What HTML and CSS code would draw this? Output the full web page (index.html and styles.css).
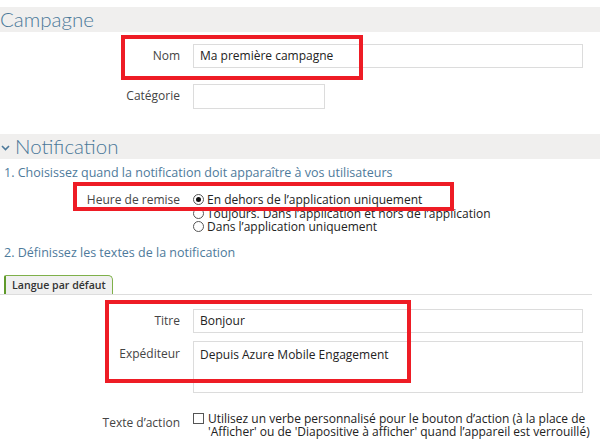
FILE: index.html
```html
<!DOCTYPE html>
<html lang="fr">
<head>
<meta charset="utf-8">
<link rel="stylesheet" href="styles.css">
</head>
<body>
<div class="page">
  <div class="bar"><span class="bar-title">Campagne</span></div>
  <div class="row row-nom">
    <label class="lbl">Nom</label>
    <div class="input wide">Ma première campagne</div>
  </div>
  <div class="row row-cat">
    <label class="lbl">Catégorie</label>
    <div class="input short"></div>
  </div>

  <div class="bar bar-notif">
    <svg class="chev" width="9" height="6" viewBox="0 0 9 6"><path d="M1 1 L4.5 4.5 L8 1" fill="none" stroke="#4e7a9b" stroke-width="1.6"/></svg>
    <span class="bar-title">Notification</span>
  </div>
  <div class="step step1">1. Choisissez quand la notification doit apparaître à vos utilisateurs</div>
  <div class="row row-heure">
    <label class="lbl">Heure de remise</label>
    <div class="radios">
      <div class="opt"><span class="radio on"></span>En dehors de l’application uniquement</div>
      <div class="opt"><span class="radio"></span>Toujours. Dans l’application et hors de l’application</div>
      <div class="opt"><span class="radio"></span>Dans l’application uniquement</div>
    </div>
  </div>
  <div class="step step2">2. Définissez les textes de la notification</div>
  <div class="tabs"><div class="tab">Langue par défaut</div></div>
  <div class="row row-titre">
    <label class="lbl">Titre</label>
    <div class="input wide">Bonjour</div>
  </div>
  <div class="row row-exp">
    <label class="lbl">Expéditeur</label>
    <div class="input wide area">Depuis Azure Mobile Engagement</div>
  </div>
  <div class="row row-action">
    <label class="lbl">Texte d’action</label>
    <div class="check-line"><span class="check"></span><span class="check-text">Utilisez un verbe personnalisé pour le bouton d’action (à la place de 'Afficher' ou de 'Diapositive à afficher' quand l’appareil est verrouillé)</span></div>
  </div>

  <div class="mark mark1"></div>
  <div class="mark mark2"></div>
  <div class="mark mark3"></div>
</div>
</body>
</html>
```
FILE: styles.css
```css
html, body {
  margin: 0;
  padding: 0;
  background: #fff;
}
body {
  font-family: "Open Sans", "Noto Sans", sans-serif;
  font-size: 12px;
  color: #333;
}
.page {
  position: relative;
  width: 600px;
  height: 445px;
  overflow: hidden;
  display: flex;
  flex-direction: column;
}
.bar {
  margin-top: 7px;
  height: 25px;
  background: #f0efee;
  display: flex;
  align-items: center;
}
.bar-title {
  font-family: Lato, "Open Sans", sans-serif;
  font-weight: 300;
  font-size: 20.5px;
  color: #4a7899;
  line-height: 25px;
}
.bar-notif {
  margin-top: 25px;
  gap: 5px;
}
.chev {
  margin-left: 1px;
  margin-top: 2px;
}
.row {
  display: grid;
  grid-template-columns: 180px 390px;
  column-gap: 13px;
}
.lbl {
  text-align: right;
  color: #444;
  line-height: 24px;
}
.input {
  box-sizing: border-box;
  border: 1px solid #dcdcdc;
  height: 24px;
  line-height: 22px;
  padding: 0 6px;
  color: #222;
}
.short {
  width: 132px;
  height: 25px;
}
.row-nom { margin-top: 12px; }
.row-cat { margin-top: 16px; }
.step {
  color: #4e7a9b;
  font-size: 12.5px;
  padding-left: 4px;
  line-height: 16px;
}
.step1 { margin-top: 6px; }
.row-heure { margin-top: 12px; }
.row-heure .lbl { line-height: 14px; }
.radios {
  display: flex;
  flex-direction: column;
}
.opt {
  display: flex;
  align-items: center;
  line-height: 13.5px;
  color: #222;
}
.radio {
  box-sizing: border-box;
  width: 11px;
  height: 11px;
  border: 1px solid #555;
  border-radius: 50%;
  margin-right: 3px;
  position: relative;
}
.radio.on::after {
  content: "";
  position: absolute;
  left: 2px;
  top: 2px;
  width: 5px;
  height: 5px;
  border-radius: 50%;
  background: #111;
}
.step2 { margin-top: 11px; }
.tabs {
  margin-top: 14px;
  width: 592px;
  border-bottom: 1px solid #dddddd;
  display: flex;
}
.tab {
  margin-left: 4px;
  height: 19px;
  box-sizing: border-box;
  padding: 0 6px 0 6px;
  background: #f0f0f0;
  border-left: 2px solid #5f9a2a;
  border-top: 1px solid #7fb04a;
  border-right: 1px solid #7fb04a;
  border-top-left-radius: 2px;
  border-top-right-radius: 5px;
  font-size: 10.6px;
  font-weight: 600;
  line-height: 18px;
  color: #333;
  white-space: nowrap;
}
.row-titre { margin-top: 14px; }
.row-exp { margin-top: 8px; }
.row-exp .lbl { line-height: 26px; }
.area {
  height: 52px;
  line-height: 26px;
}
.row-action { margin-top: 19px; }
.row-action .lbl { line-height: 14px; padding-top: 4px; }
.check-line {
  display: flex;
  align-items: flex-start;
  width: 400px;
}
.check {
  flex: none;
  box-sizing: border-box;
  width: 11px;
  height: 11px;
  border: 1px solid #555;
  margin-top: 1px;
  margin-right: 4px;
}
.check-text {
  line-height: 13px;
  color: #222;
}
.mark {
  position: absolute;
  border: 4px solid #ee1c25;
  box-sizing: border-box;
}
.mark1 { left: 121px; top: 35px; width: 242px; height: 45px; }
.mark2 { left: 73px; top: 182px; width: 381px; height: 29px; }
.mark3 { left: 105px; top: 300px; width: 306px; height: 83px; }
```
